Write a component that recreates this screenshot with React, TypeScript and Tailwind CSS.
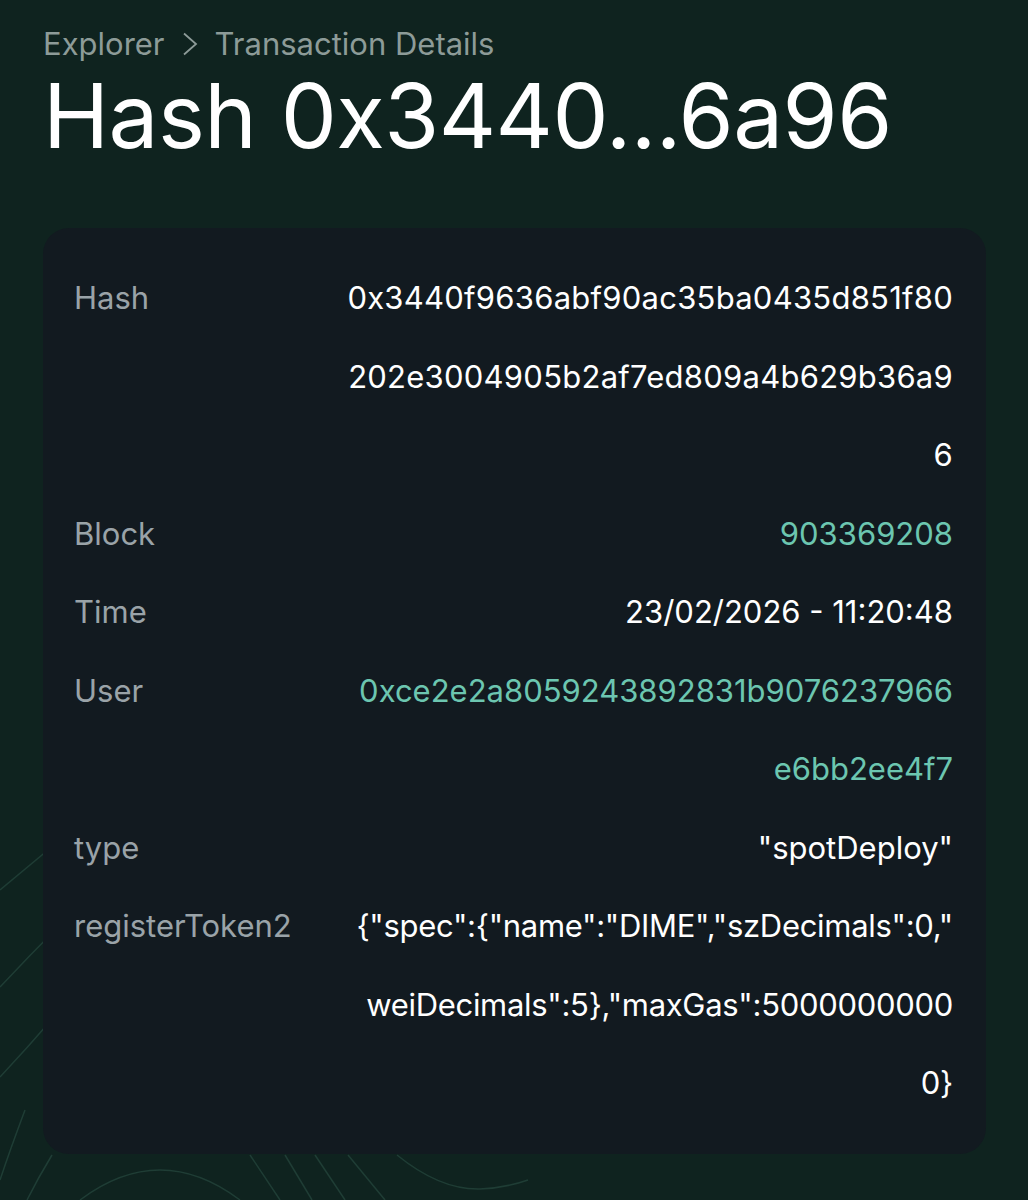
import { ReactNode } from 'react'

type Row = {
  label: string
  lines: string[]
  link?: boolean
  tracking?: string
}

const rows: Row[] = [
  {
    label: 'Hash',
    lines: ['0x3440f9636abf90ac35ba0435d851f80', '202e3004905b2af7ed809a4b629b36a9', '6'],
    tracking: 'tracking-[0.25px]',
  },
  { label: 'Block', lines: ['903369208'], link: true },
  { label: 'Time', lines: ['23/02/2026 - 11:20:48'] },
  { label: 'User', lines: ['0xce2e2a8059243892831b9076237966', 'e6bb2ee4f7'], link: true },
  { label: 'type', lines: ['"spotDeploy"'] },
  {
    label: 'registerToken2',
    lines: [
      '{"spec":{"name":"DIME","szDecimals":0,"',
      'weiDecimals":5},"maxGas":5000000000',
      '0}',
    ],
    tracking: 'tracking-[-0.3px]',
  },
]

function Backdrop() {
  // faint contour lines behind the card
  return (
    <svg
      className="absolute inset-0 w-full h-full pointer-events-none"
      viewBox="0 0 1028 1200"
      preserveAspectRatio="none"
      fill="none"
      stroke="#1f3d35"
      strokeWidth="1.5"
    >
      <path d="M0 890 Q30 865 60 840" />
      <path d="M0 987 Q30 955 60 925" />
      <path d="M0 1077 Q30 1045 60 1010" />
      <path d="M0 1180 Q10 1150 25 1110" />
      <path d="M27 1200 Q38 1178 52 1155" />
      <path d="M80 1200 Q160 1140 240 1200" />
      <path d="M250 1155 L280 1200" />
      <path d="M285 1155 L312 1200" />
      <path d="M315 1155 L345 1200" />
      <path d="M348 1155 L385 1200" />
      <path d="M397 1155 Q440 1190 480 1189 Q505 1188 528 1180" />
    </svg>
  )
}

function Value({ row }: { row: Row }): ReactNode {
  return (
    <div className={`text-right ${row.tracking ?? ''} ${row.link ? 'text-[#6cc6b0]' : 'text-white'}`}>
      {row.lines.map((l, i) => (
        <div key={i} className="whitespace-pre">
          {l}
        </div>
      ))}
    </div>
  )
}

export default function App() {
  return (
    <div
      className="relative min-h-[1200px] overflow-hidden bg-[#0f231f]"
      style={{ fontFamily: 'Inter, "Noto Sans", sans-serif' }}
    >
      <Backdrop />

      <div className="relative z-10 px-[43px] pt-[26px] pb-10">
        {/* Breadcrumb */}
        <nav className="flex items-center gap-[17px] text-[31px] leading-[36px] text-[#8d9b98]">
          <span>Explorer</span>
          <svg width="16" height="24" viewBox="0 0 16 24" fill="none" stroke="currentColor" strokeWidth="1.8">
            <path d="M2 1.5 L14 12 L2 22.5" />
          </svg>
          <span>Transaction Details</span>
        </nav>

        <h1 className="mt-[10px] text-[89px] leading-[88px] font-normal text-white tracking-[-0.6px]">
          Hash 0x3440...6a96
        </h1>

        {/* Details card */}
        <div className="mt-[68px] w-[943px] rounded-[26px] bg-[#121a20] pl-[31px] pr-[33px] py-[31px] text-[31px] leading-[78.5px]">
          {rows.map((r) => (
            <div key={r.label} className="flex justify-between gap-6">
              <div className="text-[#9aa3a8] whitespace-nowrap">{r.label}</div>
              <Value row={r} />
            </div>
          ))}
        </div>
      </div>
    </div>
  )
}
